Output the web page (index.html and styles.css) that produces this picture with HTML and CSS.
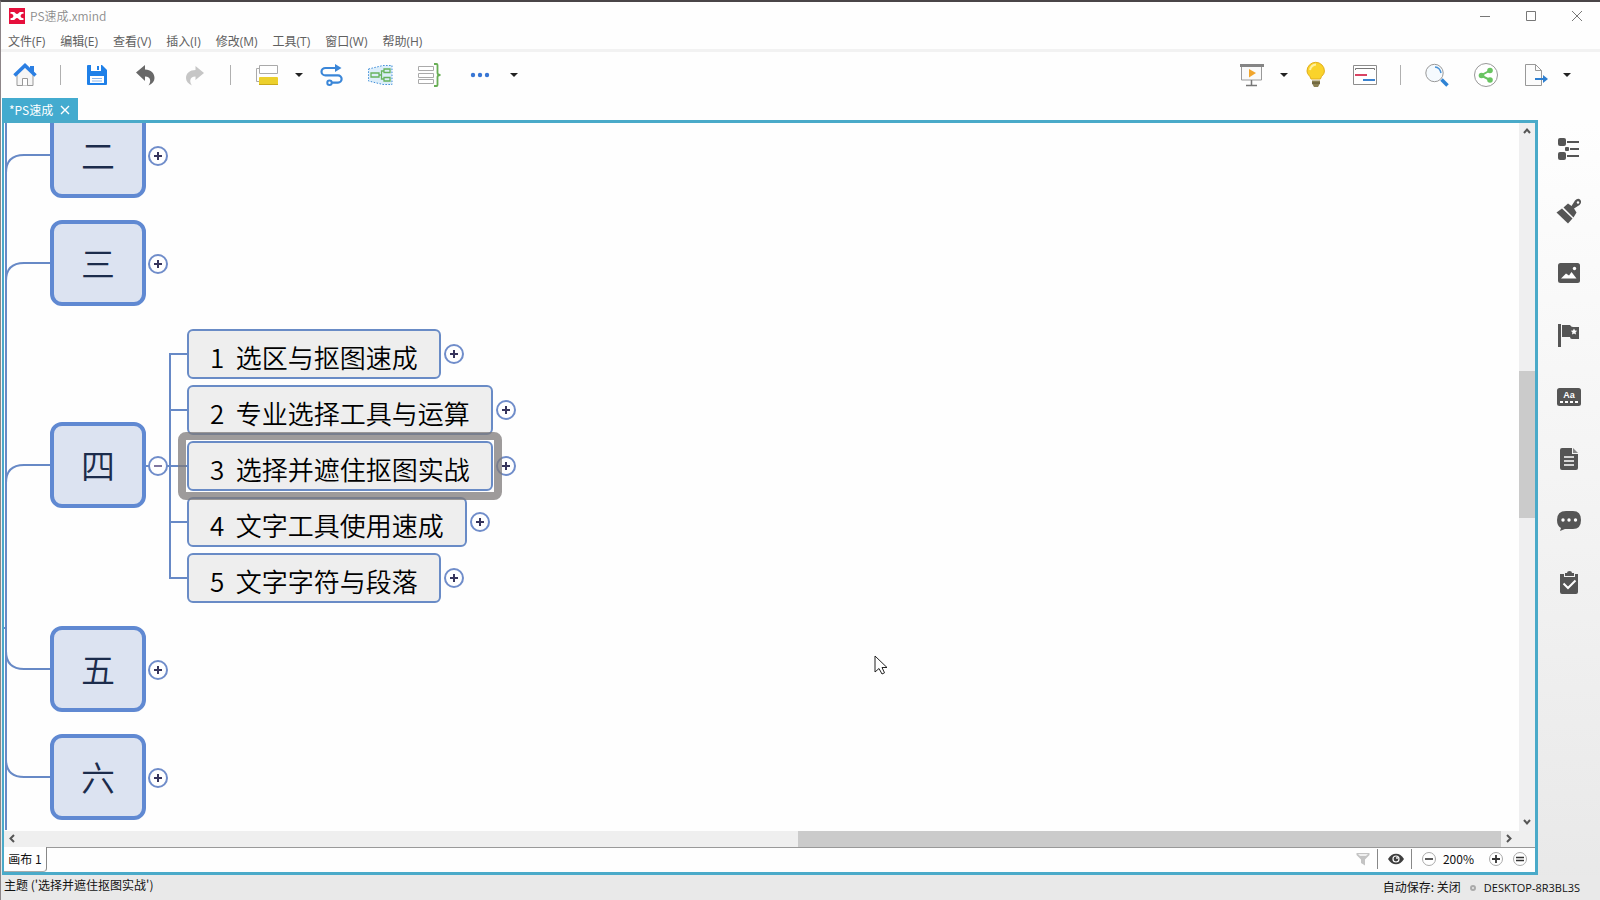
FILE: index.html
```html
<!DOCTYPE html>
<html lang="zh-CN">
<head>
<meta charset="utf-8">
<title>PS速成.xmind</title>
<link rel="stylesheet" href="styles.css">
</head>
<body>
<div class="window">
  <header class="titlebar">
    <svg class="logo" width="16" height="16" viewBox="0 0 16 16" aria-hidden="true"><rect width="16" height="16" fill="#e60f3c"/><path d="M1.500 4h3.200c1.300 0 1.900 2 3.300 2s2-2 3.300-2h3.200v1.800c-1.800 0-2.500.6-3 2.200.5 1.600 1.200 2.200 3 2.200V12h-3.200c-1.300 0-1.900-2-3.300-2s-2 2-3.300 2H1.500v-1.800c1.800 0 2.500-.6 3-2.200-.5-1.600-1.200-2.200-3-2.200z" fill="#fff"/></svg>
    <h1 class="title">PS速成.xmind</h1>
    <div class="controls">
      <button aria-label="最小化"><svg width="12" height="12" viewBox="0 0 12 12"><path d="M1 6.500h10"/></svg></button>
      <button aria-label="最大化"><svg width="12" height="12" viewBox="0 0 12 12"><path d="M1.500 1.500h9v9h-9z"/></svg></button>
      <button aria-label="关闭"><svg width="12" height="12" viewBox="0 0 12 12"><path d="M1 1l10 10M11 1L1 11"/></svg></button>
    </div>
  </header>
  <nav class="menubar">
    <button>文件(F)</button><button>编辑(E)</button><button>查看(V)</button><button>插入(I)</button><button>修改(M)</button><button>工具(T)</button><button>窗口(W)</button><button>帮助(H)</button>
  </nav>
  <div class="toolbar">
    <div class="tools">
      <button class="tool" aria-label="主页"><svg width="28" height="28" viewBox="0 0 28 28"><path d="M6 12v12.500h16V12l-8-7z" fill="#f6f6f6" stroke="#999"/><path d="M11.500 24.500v-7h5v7" fill="#fff" stroke="#999"/><path d="M3.500 14.500L14 4.500l10.500 10" fill="none" stroke="#2b7fe3" stroke-width="3.600"/><path d="M19 5h4v7l-4-3.500z" fill="#2b7fe3"/></svg></button>
      <span class="sep"></span>
      <button class="tool" aria-label="保存"><svg width="28" height="28" viewBox="0 0 28 28"><path d="M4 5q0-1 1-1h14l5 5v14q0 1-1 1H5q-1 0-1-1z" fill="#1f80e8"/><path d="M8 4h10v6H8zM7 15h14v7H7z" fill="#fff"/><path d="M14 5h2v4h-2z" fill="#1f80e8"/><path d="M9 17.500h10M9 20h10" stroke="#8ab6ed"/></svg></button>
      <button class="tool" aria-label="撤销"><svg width="28" height="28" viewBox="0 0 28 28"><path d="M4 11.500L13 4v4.500C19 9 22.500 12 22.500 17c0 3-2 6-6 7.500 2.500-3 3-9-3.500-9V20z" fill="#686868"/></svg></button>
      <button class="tool" aria-label="重做"><svg width="28" height="28" viewBox="0 0 28 28"><path d="M23 12l-8.500-7v4C9 9 5 12 5 17c0 3 2 6 6 7.500-2.500-3-3-9 3.500-9V19z" fill="#c6c6c6"/></svg></button>
      <span class="sep"></span>
      <button class="tool" aria-label="主题"><svg width="28" height="28" viewBox="0 0 28 28"><path d="M6 7.500H3.500v13H6" fill="none" stroke="#aaa"/><path d="M6.500 4.500h18v8h-18z" fill="#fff" stroke="#aaa"/><rect x="6" y="16" width="19" height="8" rx="1" fill="#ecd02c"/><path d="M6 23.500h19" stroke="#c9a91a"/></svg></button>
      <button class="caret" aria-label="主题选项"></button>
      <button class="tool" aria-label="联系"><svg width="28" height="28" viewBox="0 0 28 28"><g fill="none" stroke="#3a86d8" stroke-width="2.200"><path d="M19 7H8.500a4 3.700 0 000 7.400H21a3.600 3.600 0 010 7.200h-6"/><circle cx="12.500" cy="21.800" r="2.200" stroke-width="2"/></g><path d="M18 3l6.500 4-6.500 4z" fill="#3a86d8"/></svg></button>
      <button class="tool" aria-label="外框"><svg width="28" height="28" viewBox="0 0 28 28"><path d="M2.500 8L17 4.500h9v19h-9l-14.500-3.500z" fill="#dceefa" stroke="#3c8bd8" stroke-dasharray="1.500 1.500"/><g fill="none" stroke="#66b35e" stroke-width="1.300"><path d="M5 12h8v4H5zM18 8h6v3.500h-6zM18 16.500h6V20h-6zM13 14h2.500M18 10h-2.500v8H18"/></g></svg></button>
      <button class="tool" aria-label="概要"><svg width="28" height="28" viewBox="0 0 28 28"><g fill="#fff" stroke="#aaa"><path d="M3.500 5.500h15v4h-15zM3.500 12.500h15v4h-15zM3.500 18.500h15v4h-15z"/></g><path d="M19 3h2.500q1 0 1 1v8q0 2 3 2-3 0-3 2v8q0 1-1 1H19" fill="none" stroke="#68ae55" stroke-width="1.800"/></svg></button>
      <button class="tool wide" aria-label="更多"><svg width="28" height="28" viewBox="0 0 28 28" fill="#3876d4"><circle cx="7" cy="14" r="2.200"/><circle cx="14" cy="14" r="2.200"/><circle cx="21" cy="14" r="2.200"/></svg></button>
      <button class="caret" aria-label="更多选项"></button>
    </div>
    <div class="tools">
      <button class="tool" aria-label="演示"><svg width="28" height="28" viewBox="0 0 28 28"><path d="M3.500 5h20v14h-20z" fill="#fafafa" stroke="#999"/><path d="M2 3h24v3H2z" fill="#858585"/><path d="M11 8l7 4-7 4.500z" fill="#f1a52c"/><path d="M13.500 19v5M8 24.500h11" stroke="#777" stroke-width="1.500"/></svg></button>
      <button class="caret" aria-label="演示选项"></button>
      <button class="tool" aria-label="头脑风暴"><svg width="28" height="28" viewBox="0 0 28 28"><path d="M9 18c-1-4-4-4-4-8a8.700 8.700 0 0117.400 0c0 4-3 4-4 8z" fill="#fad32b" stroke="#e2ae1d"/><path d="M8 9q1-5 6-5.500" fill="none" stroke="#fff1a0" stroke-width="2"/><path d="M10 19.500h8v3l-2 3.500h-4l-2-3.500z" fill="#8b8153"/><path d="M10 22h8" stroke="#5b5230"/></svg></button>
      <button class="tool" aria-label="甘特图"><svg width="28" height="28" viewBox="0 0 28 28"><path d="M2.500 4.500h23v19h-23z" fill="#fff" stroke="#8d8d8d"/><path d="M4.500 9V7.500h19V9" fill="none" stroke="#777"/><path d="M4 14h12" stroke="#d94363" stroke-width="2"/><path d="M12 19h12" stroke="#3c83cf" stroke-width="2"/></svg></button>
      <span class="sep"></span>
      <button class="tool" aria-label="搜索"><svg width="28" height="28" viewBox="0 0 28 28"><circle cx="11.500" cy="12" r="8.700" fill="#f5fafe" stroke="#999"/><path d="M12 6q5 .5 6 6" fill="none" stroke="#4a92d6" stroke-width="1.500"/><path d="M18.500 18.500l6 6" stroke="#2f83d4" stroke-width="3.500"/></svg></button>
      <button class="tool" aria-label="分享"><svg width="28" height="28" viewBox="0 0 28 28"><circle cx="14" cy="14" r="11.500" fill="#fff" stroke="#999"/><path d="M18 9.500L9 14.500l9 4.500" fill="none" stroke="#69c461" stroke-width="2"/><g fill="#69c461"><circle cx="18" cy="9.500" r="2.800"/><circle cx="9.500" cy="14.500" r="2.800"/><circle cx="18" cy="19" r="2.800"/></g></svg></button>
      <button class="tool" aria-label="导出"><svg width="28" height="28" viewBox="0 0 28 28"><path d="M4.500 3.500h10l6 6v15h-16z" fill="#fcfcfc" stroke="#999"/><path d="M14.500 3.500v6h6" fill="none" stroke="#999"/><path d="M14 18h9" stroke="#2e7fd0" stroke-width="2"/><path d="M22 14l5 4-5 4z" fill="#2e7fd0"/></svg></button>
      <button class="caret" aria-label="导出选项"></button>
    </div>
  </div>
  <div class="workspace">
    <div class="editor-column">
      <div class="tabs"><div class="tab">*PS速成<button aria-label="关闭标签"><svg width="10" height="10" viewBox="0 0 10 10"><path d="M1 1l8 8M9 1L1 9"/></svg></button></div></div>
      <main class="editor">
        <div class="view">
          <div class="canvas">
            <svg class="links" width="600" height="710" viewBox="4 123 600 710" aria-hidden="true">
              <g fill="none" stroke="#6789c6" stroke-width="2">
                <path d="M6 120V830M4 628h2M50 155H24Q6 155 6 173M50 263H24Q6 263 6 281M50 465H24Q6 465 6 483M50 669H24Q6 669 6 651M50 777H24Q6 777 6 759"/>
                <path d="M146 466h42M188 354H170V578h18M170 410h18M170 522h18"/>
              </g>
            </svg>
            <div class="topic t2">二</div><button class="toggle g2" aria-label="展开"></button>
            <div class="topic t3">三</div><button class="toggle g3" aria-label="展开"></button>
            <div class="topic t4">四</div><button class="toggle minus g4" aria-label="收起"></button>
            <div class="topic t5">五</div><button class="toggle g5" aria-label="展开"></button>
            <div class="topic t6">六</div><button class="toggle g6" aria-label="展开"></button>
            <div class="branch">
              <div class="row"><div class="sub">1  选区与抠图速成</div><button class="toggle" aria-label="展开"></button></div>
              <div class="row"><div class="sub">2  专业选择工具与运算</div><button class="toggle" aria-label="展开"></button></div>
              <div class="row"><div class="sub selected">3  选择并遮住抠图实战</div><button class="toggle" aria-label="展开"></button></div>
              <div class="row"><div class="sub">4  文字工具使用速成</div><button class="toggle" aria-label="展开"></button></div>
              <div class="row"><div class="sub">5  文字字符与段落</div><button class="toggle" aria-label="展开"></button></div>
            </div>
            <svg class="pointer" width="14" height="20" viewBox="0 0 14 20" aria-hidden="true"><path d="M1 1v16l4-3.500 3 5.500 2.500-1.200L8 12.500h5z" fill="#fff" stroke="#222" stroke-linejoin="round"/></svg>
          </div>
          <div class="vscroll">
            <svg width="16" height="16" viewBox="0 0 16 16"><path d="M5 10l3-3.500 3 3.500"/></svg>
            <div class="track"><span class="before"></span><span class="thumb"></span><span class="after"></span></div>
            <svg width="16" height="16" viewBox="0 0 16 16"><path d="M5 5l3 3.500L11 5"/></svg>
          </div>
        </div>
        <div class="hscroll">
          <svg width="16" height="16" viewBox="0 0 16 16"><path d="M10 4L6.500 7.500 10 11"/></svg>
          <div class="track"><span class="before"></span><span class="thumb"></span></div>
          <svg width="16" height="16" viewBox="0 0 16 16"><path d="M6 4l3.500 3.500L6 11"/></svg>
        </div>
        <div class="sheetbar">
          <button class="sheet">画布 1</button>
          <div class="zoombar">
            <button aria-label="筛选"><svg width="16" height="16" viewBox="0 0 16 16"><path d="M1.500 2h13v2L10 8.500v6L6 12V8.500L1.500 4z" fill="#c4c4c4"/><path d="M3 3.300h10l-2 1.500H5z" fill="#fff"/></svg></button>
            <span class="line"></span>
            <button aria-label="显示"><svg width="18" height="16" viewBox="0 0 18 16"><path d="M1 8c4-7 12-7 16 0-4 7-12 7-16 0z" fill="#3e3e3e"/><circle cx="9" cy="8" r="3.600" fill="#fff"/><circle cx="9" cy="8" r="2.400" fill="#3e3e3e"/><circle cx="10" cy="7" r=".9" fill="#fff"/></svg></button>
            <span class="line"></span>
            <button aria-label="缩小"><svg width="16" height="16" viewBox="0 0 16 16"><circle cx="8" cy="8" r="6.500" fill="#fff" stroke="#aaa"/><path d="M4 8h8" stroke="#333" stroke-width="1.600"/></svg></button>
            <span class="percent">200%</span>
            <button aria-label="放大"><svg width="16" height="16" viewBox="0 0 16 16"><circle cx="8" cy="8" r="6.500" fill="#fff" stroke="#aaa"/><path d="M4 8h8M8 4v8" stroke="#333" stroke-width="1.800"/></svg></button>
            <button aria-label="适合大小"><svg width="16" height="16" viewBox="0 0 16 16"><circle cx="8" cy="8" r="6.500" fill="#fff" stroke="#aaa"/><path d="M4 6.500h8M4 9.500h8" stroke="#333" stroke-width="1.600"/></svg></button>
          </div>
        </div>
      </main>
    </div>
    <aside class="sidebar">
      <button aria-label="大纲"><svg width="24" height="24" viewBox="0 0 24 24"><rect x="1" y="1" width="8" height="8" rx="2"/><rect x="1" y="15" width="8" height="8" rx="2"/><rect x="8" y="10" width="4" height="4" rx="1"/><path d="M10 4h12v2H10zM13 11h9v2h-9zM10 18h12v2H10z"/></svg></button>
      <button aria-label="格式"><svg width="24" height="24" viewBox="0 0 24 24"><path d="M-.5 13.500L5 9.500l10.500 10L11 24.500z"/><path d="M6.500 8.500L11 4.500l3.500 2.500L18 1.500q3-3 5.500-.5 1.500 2.500-1 5L17 9.500l2.500 4-3 5z"/><circle cx="21" cy="3.500" r="1.200" fill="#fff"/></svg></button>
      <button aria-label="图片"><svg width="24" height="24" viewBox="0 0 24 24"><rect x="1" y="2" width="22" height="20" rx="2.500"/><path d="M4 17.500l5-5 3 2 2.500-3.500 5 6.500z" fill="#fff"/><circle cx="17.500" cy="7.500" r="1.700" fill="#fff"/></svg></button>
      <button aria-label="标记"><svg width="24" height="24" viewBox="0 0 24 24"><path d="M1 1h3v23H1zM5 2h8q1 2 3 2h6v12h-7q-2 0-2-2H5z"/><path d="M17 5.500l1 2 2.200.3-1.600 1.500.4 2.200-2-1-2 1 .4-2.200-1.600-1.500 2.200-.3z" fill="#fff"/></svg></button>
      <button aria-label="标签"><svg width="24" height="24" viewBox="0 0 24 24"><rect x="0" y="3" width="24" height="18" rx="2.500"/><text x="12" y="13" text-anchor="middle" class="aa">Aa</text><path d="M3 17h18" stroke="#fff" stroke-width="2" stroke-dasharray="3 2"/></svg></button>
      <button aria-label="备注"><svg width="24" height="24" viewBox="0 0 24 24"><path d="M5 1h10v6h6v14q0 2-2 2H5q-2 0-2-2V3q0-2 2-2z"/><path d="M16 1l5 5h-5z" fill="#888"/><path d="M7 10h10M7 14h10M7 18h10" stroke="#fff" stroke-width="1.300"/></svg></button>
      <button aria-label="评论"><svg width="24" height="24" viewBox="0 0 24 24"><path d="M9 2h7q8 0 8 9t-8 9H8l-5 2 1-3q-4-2-4-8 0-9 9-9z"/><g fill="#fff"><circle cx="6" cy="11" r="1.700"/><circle cx="12" cy="11" r="1.700"/><circle cx="18.500" cy="11" r="1.700"/></g></svg></button>
      <button aria-label="任务"><svg width="24" height="24" viewBox="0 0 24 24"><path d="M3 3h4v3h11V3h3v18q0 2-2 2H5q-2 0-2-2z"/><path d="M8 2h2q0-2 2.500-2T15 2h2v3H8z"/><path d="M6.500 12.500l4.500 4.500 7.500-7.500" fill="none" stroke="#fff" stroke-width="2"/></svg></button>
    </aside>
  </div>
  <footer class="status">
    <span>主题 ('选择并遮住抠图实战')</span>
    <span class="saved">自动保存: 关闭<i class="dot"></i><span class="host">DESKTOP-8R3BL3S</span></span>
  </footer>
</div>
</body>
</html>
```
FILE: styles.css
```css
* { box-sizing: border-box; }
body {
  margin: 0;
  font: 12px/18px "Noto Sans CJK SC", sans-serif;
  color: #222;
}
button { border: 0; padding: 0; background: none; font: inherit; color: inherit; }
svg { display: block; }
.window {
  display: flex;
  flex-direction: column;
  min-height: 100vh;
  border-top: 2px solid #4a4548;
  border-left: 1px solid #8c8588;
  background: linear-gradient(#fefefe 120px, #e8e8e8);
}

.titlebar { display: flex; align-items: center; height: 28px; padding-left: 8px; background: #fefefe; }
.title { margin: 0 0 0 5px; font-size: 12px; font-weight: 350; color: #8c8c8c; }
.controls { display: flex; margin-left: auto; }
.controls button { display: grid; place-items: center; width: 46px; height: 28px; }
.controls path { fill: none; stroke: #777; }
.menubar {
  display: flex;
  gap: 15px;
  height: 22px;
  padding: 4px 0 0 7px;
  border-bottom: 3px solid #f2f2f2;
  background: #fefefe;
  color: #606060;
}
.menubar button { line-height: 16px; white-space: nowrap; font-family: "Open Sans", "Noto Sans CJK SC", sans-serif; }

.toolbar { display: flex; justify-content: space-between; height: 46px; padding: 0 36px 0 10px; background: #fefefe; }
.tools { display: flex; align-items: center; gap: 21px; }
.tool { display: grid; place-items: center; width: 28px; height: 28px; }
.tool.wide { width: 32px; }
.sep { width: 2px; height: 20px; border-left: 1px solid #b0b0b0; }
.caret {
  width: 8px;
  height: 4px;
  margin: 0 -7px;
  background: #222;
  clip-path: polygon(0 0, 100% 0, 50% 100%);
}

.workspace { display: flex; flex: 1; }
.editor-column { display: flex; flex-direction: column; flex: 1; min-width: 0; padding-left: 1px; }
.tabs { display: flex; height: 22px; background: #fefefe; }
.tab {
  display: flex;
  align-items: center;
  gap: 7px;
  padding: 2px 8px 0 7px;
  background: #43abcf;
  color: #fff;
}
.tab path { fill: none; stroke: #fff; stroke-width: 1.4; }
.editor {
  display: flex;
  flex-direction: column;
  flex: 1;
  border: 3px solid #4aaac9;
  border-left-width: 2px;
  background: #fefefe;
}
.view { display: flex; flex: 1; }
.canvas { position: relative; flex: 1; overflow: hidden; }
.links { position: absolute; left: 0; top: 0; }
.topic {
  position: absolute;
  left: 46px;
  width: 96px;
  height: 86px;
  border: 4px solid #6089d2;
  border-radius: 12px;
  background: #dce3f1;
  color: #1c2c4c;
  font-size: 34px;
  font-weight: 350;
  line-height: 78px;
  text-align: center;
}
.t2 { top: -11px; }
.t3 { top: 97px; }
.t4 { top: 299px; }
.t5 { top: 503px; }
.t6 { top: 611px; }
.toggle {
  flex: none;
  width: 20px;
  height: 20px;
  border: 2px solid #708dca;
  border-radius: 50%;
  background:
    linear-gradient(#37355c, #37355c) center / 8px 2px no-repeat,
    linear-gradient(#37355c, #37355c) center / 2px 8px no-repeat,
    #fff;
}
.toggle.minus { background: linear-gradient(#8077a0, #8077a0) center / 8px 2px no-repeat, #fff; }
.canvas > .toggle { position: absolute; left: 144px; }
.g2 { top: 23px; }
.g3 { top: 131px; }
.g4 { top: 333px; }
.g5 { top: 537px; }
.g6 { top: 645px; }
.branch { position: absolute; left: 183px; top: 206px; display: grid; gap: 6px; }
.row { display: flex; align-items: center; gap: 3px; }
.sub {
  position: relative;
  height: 50px;
  padding: 4px 21px 0;
  border: 2px solid #698bc6;
  border-radius: 6px;
  background: #eee;
  color: #000;
  font-size: 26px;
  font-weight: 350;
  line-height: 44px;
  white-space: pre;
}
.selected::after {
  content: "";
  position: absolute;
  z-index: 1;
  inset: -11px;
  border: 8px solid rgba(125, 122, 122, 0.75);
  border-radius: 8px;
}
.pointer { position: absolute; left: 870px; top: 532px; }

.vscroll { display: flex; flex-direction: column; width: 16px; background: #efeff0; }
.vscroll path, .hscroll path { fill: none; stroke: #555; stroke-width: 2; }
.track { display: flex; flex: 1; }
.vscroll .track { flex-direction: column; }
.vscroll .before { flex: 232; }
.vscroll .thumb { flex: 147; }
.vscroll .after { flex: 297; }
.thumb { background: #cbcbcb; }
.hscroll { display: flex; height: 16px; padding-right: 18px; background: #efefef; }
.hscroll .before { flex: 778; }
.hscroll .thumb { flex: 703; }

.sheetbar { display: flex; height: 25px; }
.sheet {
  width: 43px;
  border-right: 1px solid #888;
  border-bottom: 1px solid #aaa;
  border-radius: 0 0 4px 0;
  text-align: center;
  color: #111;
}
.zoombar { display: flex; align-items: center; justify-content: flex-end; gap: 6px; flex: 1; padding: 0 7px 2px 0; border-top: 1px solid #999; }
.zoombar .line { width: 1px; height: 20px; background: #888; }
.zoombar .line + button { margin-left: 3px; }
.percent { margin-right: 8px; color: #111; }
.zoombar button:last-child { margin-left: 2px; }

.sidebar { display: flex; flex-direction: column; align-items: center; gap: 38px; width: 62px; padding-top: 39px; }
.sidebar svg { fill: #555; overflow: visible; }
.aa { fill: #fff; font: 700 9px "Liberation Sans", sans-serif; }
.status { display: flex; justify-content: space-between; height: 25px; padding: 1px 20px 0 3px; color: #111; background: #e9e9e9; }
.saved { padding-top: 2px; }
.host { font-family: "Open Sans", sans-serif; font-size: 11px; }
.dot { display: inline-block; width: 6px; height: 6px; margin: 0 8px 1px 9px; border: 2px solid #aaa; border-radius: 50%; }
```
